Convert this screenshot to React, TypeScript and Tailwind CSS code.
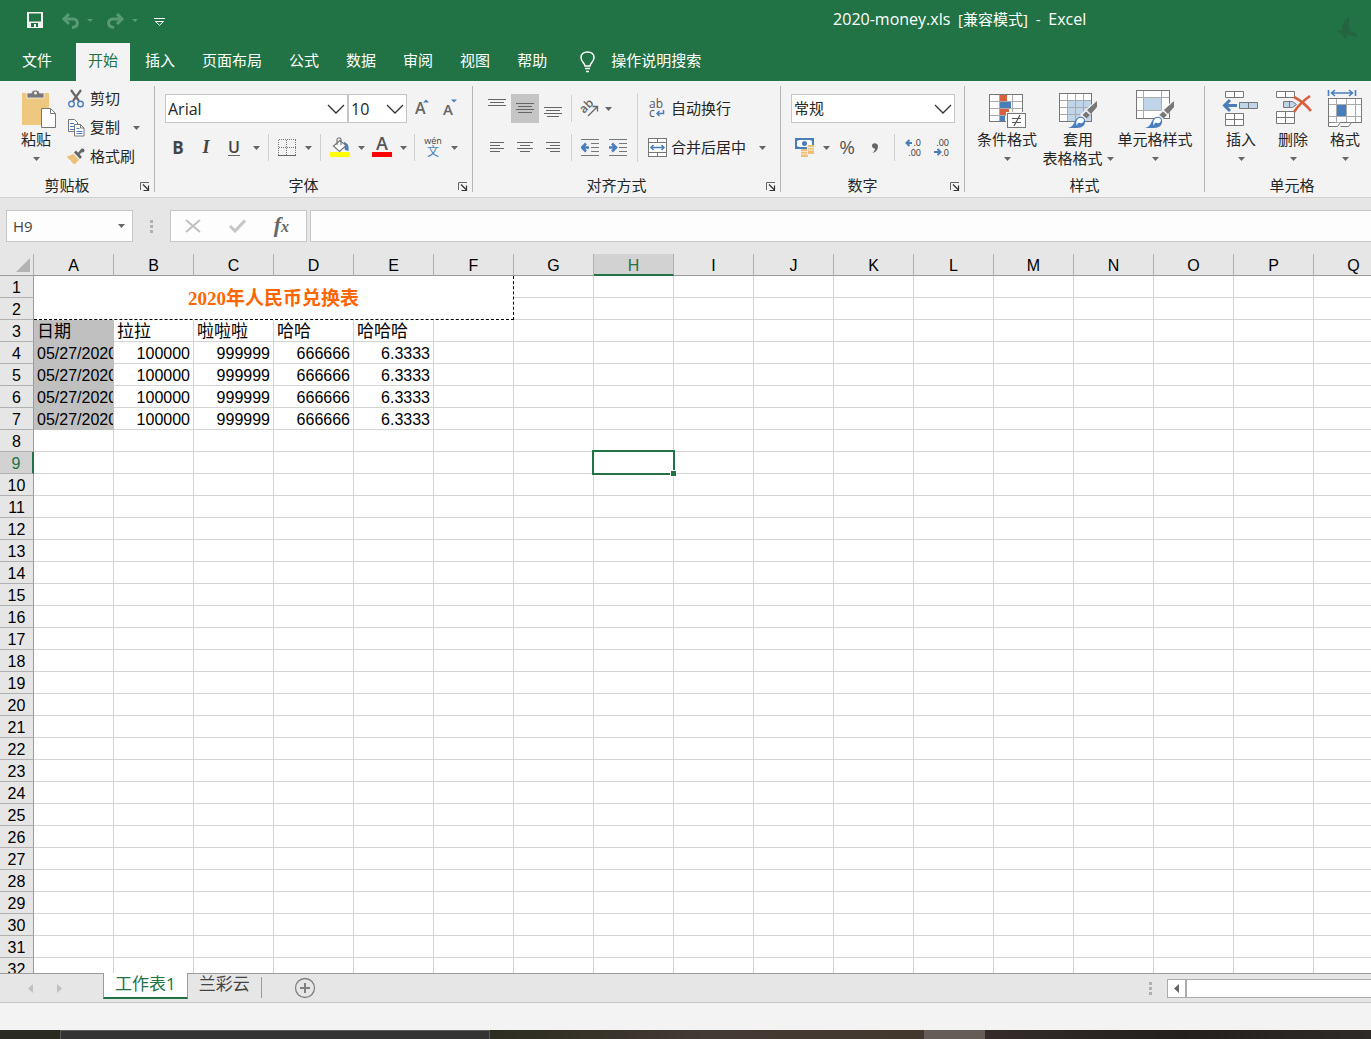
import React from "react";

const COLUMNS = "ABCDEFGHIJKLMNOPQ".split("");
const ROW_COUNT = 32;
const ACTIVE_COL = "H";
const ACTIVE_ROW = 9;

const MENU = ["插入", "页面布局", "公式", "数据", "审阅", "视图", "帮助"];

const HEADINGS = ["日期", "拉拉", "啦啦啦", "哈哈", "哈哈哈"];
const RECORD = ["05/27/2020", "100000", "999999", "666666", "6.3333"];

const cellText = (row: number, colIndex: number): string => {
  if (row === 3) return HEADINGS[colIndex] ?? "";
  if (row >= 4 && row <= 7) return RECORD[colIndex] ?? "";
  return "";
};

/* ---------- small shared pieces ---------- */

const Caret = () => (
  <svg width="7" height="4" viewBox="0 0 7 4" className="shrink-0">
    <path d="M0 0h7L3.5 4z" fill="#666" />
  </svg>
);

interface ToolProps {
  label: string;
  active?: boolean;
  className?: string;
  children: React.ReactNode;
}

const Tool: React.FC<ToolProps> = ({ label, active, className = "w-7", children }) => (
  <button
    type="button"
    aria-label={label}
    className={`flex h-[29px] shrink-0 items-center justify-center ${className} ${active ? "bg-[#c5c5c5]" : ""}`}
  >
    {children}
  </button>
);

const Drop: React.FC<{ label: string; className?: string }> = ({ label, className = "w-[14px]" }) => (
  <Tool label={label} className={className}>
    <Caret />
  </Tool>
);

const Sep: React.FC<{ className?: string }> = ({ className = "mx-1" }) => (
  <div className={`h-[27px] w-px shrink-0 bg-[#d0d0d0] ${className}`} />
);

const GroupSep = () => <div className="mt-[5px] mb-[5px] w-px shrink-0 bg-[#b5b5b5]" />;

interface GroupProps {
  title: string;
  launcher?: boolean;
  className: string;
  children: React.ReactNode;
}

const Group: React.FC<GroupProps> = ({ title, launcher, className, children }) => (
  <section className={`flex shrink-0 flex-col ${className}`}>
    <div className="flex flex-1">{children}</div>
    <div className="flex h-6 items-center">
      <span className="flex-1 text-center">{title}</span>
      {launcher && (
        <button type="button" aria-label={`${title}设置`} className="flex w-5 justify-end pt-[3px] pr-1">
          <svg width="10" height="9" viewBox="0 0 10 9" fill="none" stroke="#666">
            <path d="M.5 8V.5H9" />
            <path d="M3 2.500l5 5M8.500 3.500v5h-5" stroke="#333" strokeWidth="1.200" />
          </svg>
        </button>
      )}
    </div>
  </section>
);

interface ComboProps {
  label: string;
  value: string;
  className: string;
}

const Combo: React.FC<ComboProps> = ({ label, value, className }) => (
  <div className={`relative h-[29px] shrink-0 ${className}`}>
    <select
      aria-label={label}
      className="h-full w-full appearance-none border border-[#c6c6c6] bg-white pl-[2px] text-[#262626]"
    >
      <option>{value}</option>
    </select>
    <svg width="18" height="10" viewBox="0 0 18 10" className="pointer-events-none absolute top-[10px] right-[3px]">
      <path d="M1 1l8 8 8-8" fill="none" stroke="#333" strokeWidth="1.3" />
    </svg>
  </div>
);

interface BigButtonProps {
  icon: React.ReactNode;
  text: string;
  second?: string;
  className: string;
}

const BigButton: React.FC<BigButtonProps> = ({ icon, text, second, className }) => (
  <button type="button" className={`flex shrink-0 flex-col items-center pt-2 leading-[19px] ${className}`}>
    <span className="mb-px flex h-10 items-start">{icon}</span>
    <span className="whitespace-nowrap">{text}</span>
    <span className="flex h-[19px] items-center gap-1 whitespace-nowrap">
      {second}
      <Caret />
    </span>
  </button>
);

/* ---------- icons ---------- */

const PasteIcon = () => (
  <svg width="42" height="40" viewBox="-6 0 42 40">
    <rect x="1" y="4" width="27" height="32" fill="#edc87e" />
    <path d="M6 4h4.500c0-4 8-4 8 0H23v5H6z" fill="#777" stroke="#f3f3f3" strokeWidth=".8" />
    <circle cx="14.500" cy="4" r="1.500" fill="#f3f3f3" />
    <path d="M20.500 19.500h9l5 5v14h-14z" fill="#fff" stroke="#777" />
    <path d="M29.500 19.500v5h5" fill="none" stroke="#777" />
  </svg>
);

const CutIcon = () => (
  <svg width="18" height="19" viewBox="0 0 18 19" fill="none">
    <path d="M4 1l8 11M14 1L6 12" stroke="#666" strokeWidth="2.200" />
    <circle cx="4.500" cy="15" r="2.800" stroke="#4a7ebb" strokeWidth="1.400" />
    <circle cx="13.500" cy="15" r="2.800" stroke="#4a7ebb" strokeWidth="1.400" />
  </svg>
);

const CopyIcon = () => (
  <svg width="18" height="19" viewBox="0 0 18 19" fill="#fff" stroke="#777">
    <path d="M1.500 1.500h6l3 3v9h-9z" />
    <path d="M3 5.500h4M3 8.500h4M3 11.500h4" stroke="#4a7ebb" />
    <path d="M7.500 6.500h6l3.500 3.500v8H7.500z" />
    <path d="M13.500 6.500V10H17" fill="none" />
    <path d="M9.500 10.500h3M9.500 13.500h6M9.500 15.500h6" stroke="#4a7ebb" />
  </svg>
);

const PainterIcon = () => (
  <svg width="18" height="17" viewBox="0 0 18 17">
    <path d="M0 8.500l6.500-2.500 5.500 6-4.500 4.500-3-2.500-1-2-2-1z" fill="#edc07a" />
    <path d="M7 4.500l2-2 6 6.500-2 2z" fill="#666" />
    <path d="M11.500 6l4-4.500" stroke="#666" strokeWidth="2.600" />
    <circle cx="15.500" cy="2.500" r="2" fill="#666" />
  </svg>
);

const BordersIcon = () => (
  <svg width="18" height="18" viewBox="0 0 18 18" fill="none" stroke="#777">
    <path d="M1 .5h17M1 8.500h17M.5 1v16M8.500 1v16M17.500 1v16" strokeDasharray="1 1" />
    <path d="M0 16.500h18" stroke="#666" />
  </svg>
);

const BucketIcon = () => (
  <svg width="20" height="21" viewBox="0 0 20 21">
    <path d="M14 5c4 1 5 4 4.500 9L15 13l-1-4z" fill="#4a7ebb" />
    <path d="M3.500 9l6.500-5.500 6 5-6.500 6z" fill="#fff" stroke="#777" strokeWidth="1.200" />
    <path d="M7 8V3c0-3 4-3 4 0v5" fill="none" stroke="#777" strokeWidth="1.200" />
    <rect y="15" width="20" height="5" fill="#ff0" />
  </svg>
);

const AlignIcon: React.FC<{ lines: number[][] }> = ({ lines }) => (
  <svg width="18" height="19" viewBox="0 0 18 19" fill="#666">
    {lines.map(([x, y, w]) => (
      <rect key={y} x={x} y={y} width={w} height="1" />
    ))}
  </svg>
);

const OrientationIcon = () => (
  <svg width="22" height="19" viewBox="0 0 22 19" className="shrink-0 overflow-visible">
    <text fontSize="12" fontWeight="600" fill="#666" transform="translate(7 15) rotate(-45)">
      ab
    </text>
    <path d="M11 17L20 8M15.500 7.500H20.500V12.500" fill="none" stroke="#666" strokeWidth="1.300" />
  </svg>
);

const IndentIcon: React.FC<{ right?: boolean }> = ({ right }) => (
  <svg width="18" height="17" viewBox="0 0 18 17">
    <path d="M0 .5h18M10 4.500h8M10 8.500h8M10 12.500h8M0 16.500h18" stroke="#777" />
    <path
      d={right ? "M0 8.500h7M3 4.500l4 4-4 4" : "M8 8.500H1M5 4.500l-4 4 4 4"}
      fill="none"
      stroke="#4a7ebb"
      strokeWidth="2.600"
    />
  </svg>
);

const WrapIcon = () => (
  <svg width="18" height="20" viewBox="0 0 18 20" className="overflow-visible">
    <text x="1" y="9" fontSize="12" fontWeight="500" fill="#555">
      ab
    </text>
    <text x="1" y="18" fontSize="12" fontWeight="500" fill="#555">
      c
    </text>
    <path d="M15.500 11v3.500H9M11.500 12L9 14.500l2.500 2.500" fill="none" stroke="#4a7ebb" strokeWidth="1.500" />
  </svg>
);

const MergeIcon = () => (
  <svg width="19" height="19" viewBox="0 0 19 19" fill="none" stroke="#777">
    <rect x=".5" y=".5" width="18" height="18" fill="#fff" />
    <path d="M0 4.500h19M0 14.500h19M9.500 0v4M9.500 15v4" />
    <path d="M3 9.500h13M5.500 7L3 9.500 5.500 12M13.500 7l2.500 2.500-2.500 2.500" stroke="#4a7ebb" strokeWidth="1.500" />
  </svg>
);

const CurrencyIcon = () => (
  <svg width="20" height="19" viewBox="0 0 20 19">
    <rect width="19" height="11" fill="#4a7ebb" />
    <path d="M2 3l2-1h11l2 1v5l-2 1H4L2 8z" fill="#fff" />
    <circle cx="9.500" cy="5.500" r="2.500" fill="#4a7ebb" />
    <path d="M12 7h7v9h-6v3H6v-8h6z" fill="#edc07a" />
    <path d="M12 9.500h7M12 12h7M6 13.500h7M6 16h7M12.500 7v10" stroke="#f8ead0" />
  </svg>
);

const DecimalIcon: React.FC<{ increase?: boolean }> = ({ increase }) => (
  <svg width="18" height="19" viewBox="0 0 18 19" className="overflow-visible">
    <text x="16" y="8" textAnchor="end" fontSize="9" fill="#333">
      {increase ? ".0" : ".00"}
    </text>
    <text x="16" y="18" textAnchor="end" fontSize="9" fill="#333">
      {increase ? ".00" : ".0"}
    </text>
    <path
      d={increase ? "M7 5H2M4.500 2l-3 3 3 3" : "M1 14h6M4.500 11l3 3-3 3"}
      fill="none"
      stroke="#4a7ebb"
      strokeWidth="2"
    />
  </svg>
);

const ConditionalIcon = () => (
  <svg width="38" height="40" viewBox="0 0 38 40">
    <rect x="1.500" y="5.500" width="33" height="27" fill="#fff" />
    <path d="M1.500 12.500h33M1.500 19.500h33M1.500 26.500h33M11.500 5v27M24.500 5v27" stroke="#aaa" />
    <rect x="12" y="6" width="7" height="6" fill="#d9603f" />
    <rect x="12" y="13" width="11" height="6" fill="#4a7ebb" />
    <rect x="12" y="20" width="9" height="6" fill="#d9603f" />
    <rect x="12" y="27" width="5" height="5" fill="#4a7ebb" />
    <rect x="1.500" y="5.500" width="33" height="27" fill="none" stroke="#777" />
    <rect x="18" y="23" width="20" height="17" fill="#f3f3f3" />
    <rect x="19.500" y="24.500" width="18" height="14" fill="#fff" stroke="#777" />
    <path d="M24 29.500h9M24 33.500h9M32 26l-6 11" stroke="#555" strokeWidth="1.200" />
  </svg>
);

const Brush = () => (
  <g>
    <path d="M38 11v8l-8 8-4 4-5-5 6-6z" fill="#f3f3f3" />
    <path d="M38 12v6l-6 7-4-4z" fill="#777" />
    <path d="M27 22.500l4 3.500-3.500 3.500-4-3.500z" fill="#777" />
    <path d="M9 39c4-1 5-3 7-7 2-5 9-6 10-1 1 5-3 8-8 8z" fill="#4a7ebb" />
    <path d="M18 31c2-3 6-3 7 0 0 2-2 4-4 3s-3 1-3 3c-1-2-1-4 0-6z" fill="#fff" />
  </g>
);

const TableFormatIcon = () => (
  <svg width="38" height="40" viewBox="0 0 38 40">
    <rect x=".5" y="4.500" width="32" height="28" fill="#fff" />
    <path d="M9 12h24v20H9z" fill="#c0d4ea" />
    <path d="M0 11.500h33M0 18.500h33M0 25.500h33M8.500 4v28M16.500 4v28M24.500 4v28" stroke="#aaa" />
    <rect x=".5" y="4.500" width="32" height="28" fill="none" stroke="#777" />
    <Brush />
  </svg>
);

const CellStyleIcon = () => (
  <svg width="38" height="40" viewBox="0 0 38 40">
    <rect x=".5" y="1.500" width="33" height="28" fill="#fff" />
    <path d="M0 8.500h33M0 21.500h33M7.500 1v28M25.500 1v28" stroke="#aaa" />
    <rect x="8" y="9" width="17" height="12" fill="#c0d4ea" />
    <rect x=".5" y="1.500" width="33" height="28" fill="none" stroke="#777" />
    <Brush />
  </svg>
);

const InsertCellsIcon = () => (
  <svg width="38" height="40" viewBox="0 0 38 40" fill="#fff" stroke="#777">
    <path d="M3.500 2.500h18v6h-18zM12.500 2.500v6M3.500 24.500h18v12h-18zM3.500 30.500h18M12.500 24.500v12" />
    <path d="M17.500 13.500h18v6h-18zM26.500 13.500v6" fill="#c0d4ea" />
    <path d="M15 16.500H3M8 11l-5.500 5.500L8 22" fill="none" stroke="#4a7ebb" strokeWidth="3" />
  </svg>
);

const DeleteCellsIcon = () => (
  <svg width="38" height="40" viewBox="0 0 38 40" fill="#fff" stroke="#777">
    <path d="M2.500 2.500h18v6h-18zM11.500 2.500v6M2.500 22.500h18v12h-18zM2.500 28.500h18M11.500 22.500v12" />
    <path d="M9.500 12.500h9l4 3-4 3h-9zM15.500 12.500v6" fill="#c0d4ea" />
    <path d="M20 8c6 3 12 8 17 14M36 7c-6 4-12 10-16 16" fill="none" stroke="#d9603f" strokeWidth="2.600" />
  </svg>
);

const FormatCellsIcon = () => (
  <svg width="36" height="40" viewBox="0 0 36 40" fill="none" stroke="#777">
    <path d="M1.500 1v6M28.500 1v6M5 4h20M8 1L4.500 4 8 7M22 1l3.500 3L22 7" stroke="#4a7ebb" strokeWidth="1.600" />
    <path d="M1.500 9.500h33v24h-33z" fill="#fff" />
    <path d="M1.500 15.500h33M1.500 27.500h33M9.500 10v24M19.500 10v24M28.500 10v24" stroke="#aaa" />
    <path d="M1.500 9.500h33v24h-33z" />
    <rect x="10" y="16" width="9" height="11" fill="#4a7ebb" stroke="none" />
    <path d="M1.500 34v3.500h9l3-4M13.500 37.500h8l3-4" fill="#fff" />
  </svg>
);

/* ---------- window sections ---------- */

const TitleBar = () => (
  <div className="relative flex h-[43px] items-center text-[15px] text-white">
    <div className="flex w-2/5 items-center pb-[2px] pl-[26px]">
      <button type="button" aria-label="保存" className="mr-[17px]">
        <svg width="18" height="17" viewBox="0 0 18 17">
          <path d="M1 0h16v16H1z" fill="#f3f3f3" />
          <path d="M3 1.500h12v8H3zM5 11h7v4h-2v-3H8v3H5z" fill="#217346" />
        </svg>
      </button>
      <button type="button" aria-label="撤消" className="flex items-center gap-[7px]">
        <svg width="19" height="16" viewBox="0 0 19 16" fill="none" stroke="#579a74" strokeWidth="3">
          <path d="M2 6h10c6 0 6 8-1 8.500M8 1L3 6l5 5" />
        </svg>
        <svg width="6" height="3" viewBox="0 0 6 3">
          <path d="M0 0h6L3 3z" fill="#579a74" />
        </svg>
      </button>
      <button type="button" aria-label="恢复" className="ml-[13px] flex items-center gap-[7px]">
        <svg width="19" height="16" viewBox="0 0 19 16" fill="none" stroke="#579a74" strokeWidth="3">
          <path d="M17 6H7c-6 0-6 8 1 8.500M11 1l5 5-5 5" />
        </svg>
        <svg width="6" height="3" viewBox="0 0 6 3">
          <path d="M0 0h6L3 3z" fill="#579a74" />
        </svg>
      </button>
      <button type="button" aria-label="自定义快速访问工具栏" className="ml-4 pt-[2px]">
        <svg width="11" height="8" viewBox="0 0 11 8" fill="none" stroke="#fff">
          <path d="M0 .5h11M1.500 3.500h8L5.500 7.300z" />
        </svg>
      </button>
    </div>
    <h1 className="flex-1 pb-[6px] text-center whitespace-pre">
      <span className="text-[16px]">2020-money.xls</span>
      {"  [兼容模式]  -  "}
      <span className="text-[16px]">Excel</span>
    </h1>
    <svg width="24" height="26" viewBox="0 0 24 26" className="absolute top-[15px] right-[11px]">
      <path d="M13 2c-5 3-7 8-7 13l-5 1 5 3 3 5 3-4 9 2v-3l-7-3c-2-5 0-9-1-14z" fill="#246441" />
    </svg>
  </div>
);

const MenuBar = () => (
  <nav className="flex h-[38px] text-[15px] text-white">
    <button type="button" className="mr-3 ml-[10px] px-3 pb-[3px]">
      文件
    </button>
    <button type="button" className="bg-[#f3f3f3] px-3 pb-[3px] text-[#217346]">
      开始
    </button>
    {MENU.map((item) => (
      <button key={item} type="button" className="ml-[3px] px-3 pb-[3px]">
        {item}
      </button>
    ))}
    <button type="button" className="ml-[21px] flex items-center gap-[15px]">
      <svg width="16" height="22" viewBox="0 0 16 22" fill="none" stroke="#fff" strokeWidth="1.500">
        <path d="M5 15c0-3-4-4-4-8.500C1 3 4 1 7.500 1S14 3 14 6.500C14 11 10 12 10 15z" />
        <path d="M5 17.500h5M6 20.500h3" />
      </svg>
      <span className="pb-[3px]">操作说明搜索</span>
    </button>
  </nav>
);

const ClipboardGroup = () => (
  <Group title="剪贴板" launcher className="w-[154px]">
    <BigButton icon={<PasteIcon />} text="粘贴" className="ml-[11px] w-[50px]" />
    <div className="flex flex-col pt-[3px] pl-px">
      <button type="button" className="flex h-[29px] items-center">
        <span className="flex w-7 justify-center">
          <CutIcon />
        </span>
        剪切
      </button>
      <div className="flex h-[29px] items-center">
        <button type="button" className="flex items-center">
          <span className="flex w-7 justify-center">
            <CopyIcon />
          </span>
          复制
        </button>
        <Drop label="复制选项" className="ml-2 w-4" />
      </div>
      <button type="button" className="flex h-[29px] items-center">
        <span className="flex w-7 justify-center">
          <PainterIcon />
        </span>
        格式刷
      </button>
    </div>
  </Group>
);

const FontGroup = () => (
  <Group title="字体" launcher className="w-[317px]">
    <div className="flex flex-col gap-[10px] pt-[13px] pl-[9px]">
      <div className="flex items-center pl-px">
        <Combo label="字体" value="Arial" className="w-[183px] text-[16px]" />
        <Combo label="字号" value="10" className="w-[59px] text-[16px]" />
        <Tool label="增大字号" className="ml-[2px] w-7">
          <svg width="16" height="21" viewBox="0 0 16 21" className="overflow-visible">
            <text x="0" y="16" fontSize="16" fontWeight="600" fill="#666">
              A
            </text>
            <path d="M8 4.500h6l-3-3z" fill="#4a7ebb" />
          </svg>
        </Tool>
        <Tool label="减小字号">
          <svg width="16" height="21" viewBox="0 0 16 21" className="overflow-visible">
            <text x="0" y="17" fontSize="15" fontWeight="600" fill="#666">
              A
            </text>
            <path d="M8 1.500h6l-3 3z" fill="#4a7ebb" />
          </svg>
        </Tool>
      </div>
      <div className="flex items-center text-[#444]">
        <Tool label="加粗">
          <span className="text-[17px] font-bold">B</span>
        </Tool>
        <Tool label="倾斜">
          <span className="font-['Liberation_Serif',serif] text-[18px] font-bold italic">I</span>
        </Tool>
        <Tool label="下划线">
          <span className="border-b border-[#666] text-[16px] leading-4 font-semibold">U</span>
        </Tool>
        <Drop label="下划线选项" className="w-4" />
        <Sep />
        <Tool label="边框">
          <BordersIcon />
        </Tool>
        <Drop label="边框选项" />
        <Sep className="mx-[5px]" />
        <Tool label="填充颜色">
          <BucketIcon />
        </Tool>
        <Drop label="填充颜色选项" />
        <Tool label="字体颜色">
          <svg width="20" height="21" viewBox="0 0 20 21" className="overflow-visible">
            <text x="10" y="13" textAnchor="middle" fontSize="18" fontWeight="600" fill="#555">
              A
            </text>
            <rect y="15" width="20" height="5" fill="#f00" />
          </svg>
        </Tool>
        <Drop label="字体颜色选项" />
        <Sep />
        <Tool label="拼音指南">
          <span className="flex flex-col items-center pb-px text-[9px] leading-[9px]">
            wén
            <span className="text-[12px] leading-[14px] text-[#4a7ebb]">文</span>
          </span>
        </Tool>
        <Drop label="拼音指南选项" />
      </div>
    </div>
  </Group>
);

const AlignmentGroup = () => (
  <Group title="对齐方式" launcher className="w-[307px]">
    <div className="flex flex-col gap-[10px] pt-[13px] pl-[10px]">
      <div className="flex items-center">
        <Tool label="顶端对齐">
          <AlignIcon lines={[[0, 0, 18], [2, 3, 14], [0, 6, 18]]} />
        </Tool>
        <Tool label="垂直居中" active>
          <AlignIcon lines={[[0, 4, 18], [2, 7, 14], [0, 10, 18], [2, 13, 14]]} />
        </Tool>
        <Tool label="底端对齐">
          <AlignIcon lines={[[0, 8, 18], [2, 11, 14], [0, 14, 18], [3, 17, 12]]} />
        </Tool>
        <Sep />
        <Tool label="方向" className="w-6">
          <OrientationIcon />
        </Tool>
        <Drop label="方向选项" className="w-4" />
      </div>
      <div className="flex items-center">
        <Tool label="左对齐">
          <AlignIcon lines={[[2, 4, 14], [2, 7, 10], [2, 10, 14], [2, 13, 10]]} />
        </Tool>
        <Tool label="居中">
          <AlignIcon lines={[[1, 4, 16], [4, 7, 10], [1, 10, 16], [4, 13, 10]]} />
        </Tool>
        <Tool label="右对齐">
          <AlignIcon lines={[[2, 4, 14], [6, 7, 10], [2, 10, 14], [6, 13, 10]]} />
        </Tool>
        <Sep />
        <Tool label="减少缩进量">
          <IndentIcon />
        </Tool>
        <Tool label="增加缩进量">
          <IndentIcon right />
        </Tool>
      </div>
    </div>
    <div className="mx-[5px] mt-3 mb-[11px] w-px bg-[#d0d0d0]" />
    <div className="flex flex-col gap-[10px] pt-[13px]">
      <button type="button" className="flex h-[29px] items-center">
        <span className="flex w-7 justify-center">
          <WrapIcon />
        </span>
        自动换行
      </button>
      <div className="flex items-center">
        <button type="button" className="flex h-[29px] items-center">
          <span className="flex w-7 justify-center">
            <MergeIcon />
          </span>
          合并后居中
        </button>
        <Drop label="合并选项" className="ml-2 w-4" />
      </div>
    </div>
  </Group>
);

const NumberGroup = () => (
  <Group title="数字" launcher className="w-[183px]">
    <div className="flex flex-col gap-[10px] pt-[13px] pl-[10px]">
      <Combo label="数字格式" value="常规" className="w-[164px] text-[15px]" />
      <div className="flex items-center text-[#555]">
        <Tool label="会计数字格式">
          <CurrencyIcon />
        </Tool>
        <Drop label="会计数字格式选项" />
        <Tool label="百分比样式">
          <span className="text-[19px]">%</span>
        </Tool>
        <Tool label="千位分隔样式">
          <svg width="6" height="10" viewBox="0 0 6 10">
            <path d="M0 2.500C0-.5 6-1 6 3.500 6 7 3 9.500.5 10 2 8.500 3 7 3 5.500 1.500 6 0 4.500 0 2.500z" fill="#666" />
          </svg>
        </Tool>
        <Sep className="mx-[5px]" />
        <Tool label="增加小数位数">
          <DecimalIcon increase />
        </Tool>
        <Tool label="减少小数位数">
          <DecimalIcon />
        </Tool>
      </div>
    </div>
  </Group>
);

const Ribbon = () => (
  <div className="flex h-[117px] overflow-hidden border-b border-[#d0d0d0] bg-[#f3f3f3] text-[15px] text-[#262626]">
    <ClipboardGroup />
    <GroupSep />
    <FontGroup />
    <GroupSep />
    <AlignmentGroup />
    <GroupSep />
    <NumberGroup />
    <GroupSep />
    <Group title="样式" className="w-[239px]">
      <BigButton icon={<ConditionalIcon />} text="条件格式" className="ml-[6px] w-[72px]" />
      <BigButton icon={<TableFormatIcon />} text="套用" second="表格格式" className="w-[70px]" />
      <BigButton icon={<CellStyleIcon />} text="单元格样式" className="w-[84px]" />
    </Group>
    <GroupSep />
    <Group title="单元格" className="w-[174px]">
      <BigButton icon={<InsertCellsIcon />} text="插入" className="ml-[10px] w-[52px]" />
      <BigButton icon={<DeleteCellsIcon />} text="删除" className="w-[52px]" />
      <BigButton icon={<FormatCellsIcon />} text="格式" className="w-[52px]" />
    </Group>
  </div>
);

const Dots = () => (
  <div className="flex flex-col gap-[2px]">
    <span className="h-[3px] w-[3px] bg-[#b0b0b0]" />
    <span className="h-[3px] w-[3px] bg-[#b0b0b0]" />
    <span className="h-[3px] w-[3px] bg-[#b0b0b0]" />
  </div>
);

const FormulaBar = () => (
  <div className="flex h-14 items-center pl-[6px]">
    <div className="flex h-8 w-[127px] items-center border border-[#c6c6c6] bg-[#fdfdfd] pr-[7px]">
      <input
        aria-label="名称框"
        defaultValue="H9"
        className="h-full w-full min-w-0 bg-transparent pl-[6px] text-[15px] text-[#444] outline-none"
      />
      <button type="button" aria-label="名称列表">
        <Caret />
      </button>
    </div>
    <div className="mr-[17px] ml-[17px]">
      <Dots />
    </div>
    <div className="flex h-8 w-[137px] items-center justify-around border border-[#c6c6c6] bg-[#fdfdfd] pr-[3px]">
      <button type="button" aria-label="取消">
        <svg width="16" height="14" viewBox="0 0 16 14" stroke="#c0c0c0" strokeWidth="2">
          <path d="M1 1l14 12M15 1L1 13" />
        </svg>
      </button>
      <button type="button" aria-label="输入">
        <svg width="17" height="14" viewBox="0 0 17 14" fill="none" stroke="#c6c6c6" strokeWidth="3">
          <path d="M1 7l5 5L16 1.500" />
        </svg>
      </button>
      <button
        type="button"
        aria-label="插入函数"
        className="font-['Liberation_Serif',serif] text-[22px] leading-6 font-bold text-[#666] italic"
      >
        f<span className="text-[16px]">x</span>
      </button>
    </div>
    <input
      aria-label="编辑栏"
      className="ml-[3px] h-8 min-w-0 flex-1 border border-r-0 border-[#c6c6c6] bg-[#fdfdfd] px-2 outline-none"
    />
  </div>
);

const Cell: React.FC<{ row: number; colIndex: number }> = ({ row, colIndex }) => {
  const text = cellText(row, colIndex);
  const active = row === ACTIVE_ROW && COLUMNS[colIndex] === ACTIVE_COL;
  const shaded = colIndex === 0 && row >= 3 && row <= 7;
  const numeric = row >= 4 && colIndex > 0;

  return (
    <td
      className={`relative h-[22px] border-r border-b p-0 ${
        shaded ? "border-[#c0c0c0] bg-[#c0c0c0]" : "border-[#d4d4d4]"
      }`}
    >
      {text && (
        <div
          className={`h-[21px] overflow-hidden px-[3px] pt-[2px] leading-[19px] whitespace-nowrap ${
            numeric ? "text-right" : ""
          } ${row === 3 ? "text-[17px]" : ""}`}
        >
          {text}
        </div>
      )}
      {active && (
        <div className="absolute -inset-[2px] z-10 border-2 border-[#217346]">
          <span className="absolute -right-[4px] -bottom-[4px] h-[7px] w-[7px] border border-white bg-[#217346]" />
        </div>
      )}
    </td>
  );
};

const Sheet = () => (
  <div className="min-h-0 flex-1 overflow-hidden bg-white">
    <table className="w-[1394px] table-fixed border-separate border-spacing-0 font-['Liberation_Sans','Noto_Sans_CJK_SC',sans-serif] text-[16px] text-black">
      <thead>
        <tr className="bg-[#e6e6e6]">
          <th className="h-[22px] w-[34px] border-r border-b border-r-[#b0b0b0] border-b-[#9b9b9b] p-0">
            <svg width="14" height="14" viewBox="0 0 14 14" className="ml-4">
              <path d="M14 0v14H0z" fill="#b3b3b3" />
            </svg>
          </th>
          {COLUMNS.map((col) => (
            <th
              key={col}
              className={
                col === ACTIVE_COL
                  ? "h-[22px] border-r border-b-2 border-r-[#b0b0b0] border-b-[#217346] bg-[#d2d2d2] p-0 pt-[3px] leading-[17px] font-normal text-[#217346]"
                  : "h-[22px] border-r border-b border-r-[#b0b0b0] border-b-[#9b9b9b] p-0 pt-[2px] leading-[19px] font-normal"
              }
            >
              {col}
            </th>
          ))}
        </tr>
      </thead>
      <tbody>
        {Array.from({ length: ROW_COUNT }, (_, i) => i + 1).map((row) => (
          <tr key={row}>
            <th
              className={
                row === ACTIVE_ROW
                  ? "h-[22px] border-r-2 border-b border-r-[#217346] border-b-[#b0b0b0] bg-[#d2d2d2] p-0 pt-[2px] leading-[19px] font-normal text-[#217346]"
                  : "h-[22px] border-r border-b border-r-[#9b9b9b] border-b-[#b0b0b0] bg-[#e6e6e6] p-0 pt-[2px] leading-[19px] font-normal"
              }
            >
              {row}
            </th>
            {row === 1 && (
              <td
                colSpan={6}
                rowSpan={2}
                className="border-r border-b border-dashed border-black p-0 pt-[2px] text-center font-['Liberation_Serif','Noto_Sans_CJK_SC',serif] text-[19px] leading-6 font-bold text-[#ff6600]"
              >
                2020年人民币兑换表
              </td>
            )}
            {COLUMNS.map((col, index) =>
              row <= 2 && index < 6 ? null : <Cell key={col} row={row} colIndex={index} />
            )}
          </tr>
        ))}
      </tbody>
    </table>
  </div>
);

const SheetTabs = () => (
  <div className="flex h-[30px] shrink-0 border-t border-b border-t-[#9b9b9b] border-b-[#c6c6c6] text-[17px]">
    <div className="flex w-[103px] items-center gap-6 pl-7">
      <button type="button" aria-label="上一个工作表">
        <svg width="5" height="9" viewBox="0 0 5 9">
          <path d="M5 0v9L0 4.500z" fill="#c0c0c0" />
        </svg>
      </button>
      <button type="button" aria-label="下一个工作表">
        <svg width="5" height="9" viewBox="0 0 5 9">
          <path d="M0 0v9l5-4.500z" fill="#c0c0c0" />
        </svg>
      </button>
    </div>
    <button
      type="button"
      className="-mt-px flex h-[26px] border-r border-b-2 border-l border-r-[#9b9b9b] border-b-[#217346] border-l-[#9b9b9b] bg-white px-[11px] leading-[22px] text-[#217346]"
    >
      工作表1
    </button>
    <button type="button" className="flex h-6 px-[11px] leading-[20px] text-[#444]">
      兰彩云
    </button>
    <div className="mt-[3px] h-[21px] w-px bg-[#9b9b9b]" />
    <button type="button" aria-label="新工作表" className="ml-8">
      <svg width="22" height="22" viewBox="0 0 22 22" fill="none" stroke="#808080">
        <circle cx="11" cy="11" r="9.500" strokeWidth="1.300" />
        <path d="M6 11h10M11 6v10" strokeWidth="2" />
      </svg>
    </button>
    <div className="ml-auto flex w-[222px] items-center">
      <Dots />
      <div className="ml-[15px] flex h-[19px] flex-1 border border-r-0 border-[#ababab] bg-white">
        <button
          type="button"
          aria-label="向左滚动"
          className="flex w-[19px] items-center justify-center border-r-2 border-[#ababab]"
        >
          <svg width="5" height="9" viewBox="0 0 5 9">
            <path d="M5 0v9L0 4.500z" fill="#666" />
          </svg>
        </button>
      </div>
    </div>
  </div>
);

const Taskbar = () => (
  <div className="flex h-[9px] shrink-0 bg-[#282522]">
    <div className="w-[60px] bg-[#292b21]" />
    <div className="w-[430px] border-t border-r border-l border-[#5a5a5a] bg-[#333]" />
    <div className="w-[434px] bg-linear-to-r from-[#2c2d20] via-[#433a34] to-[#43382d]" />
    <div className="w-[61px] bg-[#655c58]" />
    <div className="flex-1 bg-linear-to-r from-[#332c2a] via-[#23201e] to-[#2e2a27]" />
  </div>
);

export default function App() {
  return (
    <div className="flex h-screen flex-col overflow-hidden bg-[#e6e6e6] font-['Open_Sans','Noto_Sans_CJK_SC',sans-serif]">
      <header className="shrink-0 bg-[#217346]">
        <TitleBar />
        <MenuBar />
        <Ribbon />
      </header>
      <FormulaBar />
      <Sheet />
      <SheetTabs />
      <div className="h-[27px] shrink-0 bg-[#f3f3f3]" />
      <Taskbar />
    </div>
  );
}
